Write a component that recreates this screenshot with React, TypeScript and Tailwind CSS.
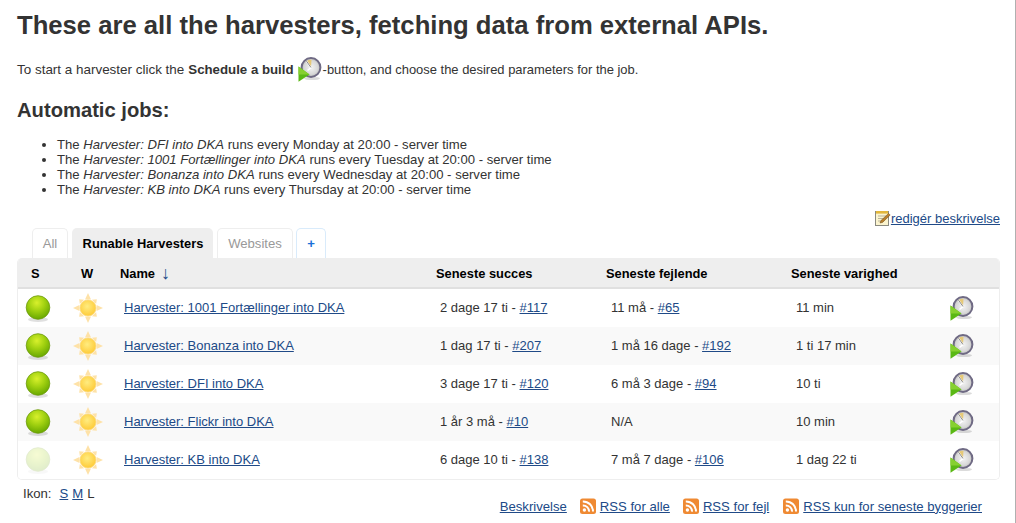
import { useId } from 'react'

interface Job {
  name: string
  success: string
  successBuild: string
  failed: string
  failedBuild?: string
  duration: string
  faded?: boolean
}

const jobs: Job[] = [
  { name: 'Harvester: 1001 Fortællinger into DKA', success: '2 dage 17 ti', successBuild: '#117', failed: '11 må', failedBuild: '#65', duration: '11 min' },
  { name: 'Harvester: Bonanza into DKA', success: '1 dag 17 ti', successBuild: '#207', failed: '1 må 16 dage', failedBuild: '#192', duration: '1 ti 17 min' },
  { name: 'Harvester: DFI into DKA', success: '3 dage 17 ti', successBuild: '#120', failed: '6 må 3 dage', failedBuild: '#94', duration: '10 ti' },
  { name: 'Harvester: Flickr into DKA', success: '1 år 3 må', successBuild: '#10', failed: 'N/A', duration: '10 min' },
  { name: 'Harvester: KB into DKA', success: '6 dage 10 ti', successBuild: '#138', failed: '7 må 7 dage', failedBuild: '#106', duration: '1 dag 22 ti', faded: true },
]

const schedule = [
  ['DFI', 'Monday'],
  ['1001 Fortællinger', 'Tuesday'],
  ['Bonanza', 'Wednesday'],
  ['KB', 'Thursday'],
]

const linkClass = 'text-[#204A87] underline'

function StatusBall({ faded }: { faded?: boolean }) {
  const id = useId()
  return (
    <svg width="26" height="28" viewBox="0 0 26 28" className={faded ? 'opacity-20' : ''}>
      <ellipse cx="13" cy="24.5" rx="10" ry="2.5" fill="#000" opacity="0.12" />
      <defs>
        <radialGradient id={id} cx="0.45" cy="0.3" r="0.7">
          <stop offset="0" stopColor="#d8f02c" />
          <stop offset="0.5" stopColor="#a0d010" />
          <stop offset="1" stopColor="#68a800" />
        </radialGradient>
      </defs>
      <circle cx="13" cy="12.5" r="11.8" fill={`url(#${id})`} stroke="#6f9a10" strokeWidth="0.8" />
    </svg>
  )
}

function Sun() {
  const id = useId()
  const rays = [0, 45, 90, 135, 180, 225, 270, 315]
  return (
    <svg width="30" height="30" viewBox="0 0 30 30">
      <defs>
        <radialGradient id={id} cx="0.45" cy="0.4" r="0.65">
          <stop offset="0" stopColor="#ffec80" />
          <stop offset="1" stopColor="#fec832" />
        </radialGradient>
      </defs>
      {rays.map(r => (
        <polygon
          key={r}
          points={r % 90 === 0 ? '15,0 18,6.5 12,6.5' : '15,2.5 18,6.5 12,6.5'}
          fill="#fee2a8"
          transform={`rotate(${r} 15 15)`}
        />
      ))}
      <circle cx="15" cy="15" r="8" fill={`url(#${id})`} stroke="#fcd978" strokeWidth="0.8" />
    </svg>
  )
}

function BuildIcon() {
  const id = useId()
  return (
    <svg width="24" height="25" viewBox="0 0 24 25" className="shrink-0">
      <defs>
        <radialGradient id={id} cx="0.5" cy="0.5" r="0.6">
          <stop offset="0" stopColor="#f4f4f4" />
          <stop offset="0.6" stopColor="#d8d8d8" />
          <stop offset="1" stopColor="#a8a8a8" />
        </radialGradient>
      </defs>
      <ellipse cx="14" cy="21.5" rx="8" ry="1.6" fill="#000" opacity="0.14" />
      <circle cx="13" cy="10.5" r="9.4" fill={`url(#${id})`} stroke="#6f6a84" strokeWidth="2" />
      <path d="M13 10.5 L8.5 4.2 A8 8 0 0 1 13.5 2.8 Z" fill="#e6c978" />
      <path d="M8.5 4.2 L13 10.5 L9.5 13.5" fill="none" stroke="#fff" strokeWidth="1.6" />
      <path d="M8.5 4.2 L13 10.5" fill="none" stroke="#555" strokeWidth="0.7" />
      <polygon points="0.5,9.5 11.5,17.5 0.5,24.8" fill="#5ab814" />
      <polygon points="0.5,9.5 11.5,17.5 0.5,17.5" fill="#86d030" />
    </svg>
  )
}

function RssIcon() {
  return (
    <svg width="16" height="16" viewBox="0 0 16 16" className="shrink-0">
      <rect x="0" y="0.5" width="16" height="15.5" rx="2.5" fill="#ef8a33" />
      <circle cx="4.4" cy="12" r="1.7" fill="#fff" />
      <path d="M2.8 7.4 A6 6 0 0 1 9 13.6" fill="none" stroke="#fff" strokeWidth="2" />
      <path d="M2.8 3.4 A10 10 0 0 1 13 13.6" fill="none" stroke="#fff" strokeWidth="2" />
    </svg>
  )
}

function NotepadIcon() {
  return (
    <svg width="16" height="16" viewBox="0 0 16 16" className="shrink-0">
      <rect x="0.5" y="1.5" width="13" height="14" fill="#fbf4cf" stroke="#8a8a80" />
      <rect x="1" y="1" width="12" height="2.6" fill="#e2b73d" />
      <path d="M3 6h8M3 8.5h6M3 11h5" stroke="#b8b39a" strokeWidth="1" />
      <path d="M5 13 L6 10.5 L13.5 3.5 L15.2 5 L7.6 12.4 Z" fill="#b9802c" stroke="#6d4a18" strokeWidth="0.5" />
    </svg>
  )
}

function JobRow({ job, striped }: { job: Job; striped: boolean }) {
  return (
    <div className={`flex h-[38px] items-center text-[13px] ${striped ? 'bg-[#f9f9f9]' : 'bg-white'}`}>
      <div className="flex w-[55px] shrink-0 pl-[7px] pt-[1px]"><StatusBall faded={job.faded} /></div>
      <div className="flex w-[47px] shrink-0"><Sun /></div>
      <div className="w-[316px] shrink-0 pb-[2px] pl-[4px]"><a className={linkClass}>{job.name}</a></div>
      <div className="w-[170px] shrink-0 pb-[2px] pl-[4px]">
        {job.success} - <a className={linkClass}>{job.successBuild}</a>
      </div>
      <div className="w-[185px] shrink-0 pb-[2px] pl-[5px]">
        {job.failed}
        {job.failedBuild && <> - <a className={linkClass}>{job.failedBuild}</a></>}
      </div>
      <div className="w-[159px] shrink-0 pb-[2px] pl-[5px]">{job.duration}</div>
      <BuildIcon />
    </div>
  )
}

export default function App() {
  return (
    <div className="h-[523px] overflow-hidden border-r border-[#b0b0b0] bg-white pl-[17px] pr-[15px] font-['Liberation_Sans',Arial,sans-serif] text-[13.13px] leading-[15px] text-[#333]">
      <h1 className="pt-[10px] text-[25.65px] font-bold leading-[30px]">
        These are all the harvesters, fetching data from external APIs.
      </h1>

      <p className="mt-[16px] flex h-[26px] items-center">
        <span className="text-[13.45px]">To start a harvester click the</span>
        <b className="ml-[4px] text-[13.25px]">Schedule a build</b>
        <span className="ml-[4px] mr-[1px] flex"><BuildIcon /></span>
        <span className="text-[12.95px]">-button, and choose the desired parameters for the job.</span>
      </p>

      <h2 className="mt-[16px] text-[20.2px] font-bold leading-[24px]">Automatic jobs:</h2>

      <ul className="mt-[15px] list-disc pl-[40px]">
        {schedule.map(([name, day]) => (
          <li key={name}>
            The <i>Harvester: {name} into DKA</i> runs every {day} at 20:00 - server time
          </li>
        ))}
      </ul>

      <div className="mt-[13px] flex h-[16px] items-center justify-end">
        <NotepadIcon />
        <a className={`text-[13px] ${linkClass}`}>redigér beskrivelse</a>
      </div>

      <div className="mt-[1px] flex h-[31px] items-end pl-[15px]">
        <div className="flex h-[30px] w-[36px] items-center justify-center rounded-t-[5px] border border-b-0 border-[#eeeeee] text-[#999]">All</div>
        <div className="ml-[4px] flex h-[30px] w-[141px] items-center justify-center rounded-t-[5px] bg-[#eeeeee] pl-[1px] text-[12.87px] font-bold text-black">Runable Harvesters</div>
        <div className="ml-[4px] flex h-[30px] w-[76px] items-center justify-center rounded-t-[5px] border border-b-0 border-[#eeeeee] text-[#999]">Websites</div>
        <div className="ml-[3px] flex h-[30px] w-[30px] items-center justify-center rounded-t-[5px] border border-b-0 border-[#d9ebfb] font-bold text-[#1a6fd8]">+</div>
      </div>

      <div className="overflow-hidden rounded-[5px] border-b border-l border-r border-[#eeeeee]">
        <div className="flex h-[31px] items-center border-b-2 border-[#e0e0e0] bg-[#eeeeee] pt-[1px] text-[12.87px] font-bold text-black">
          <div className="w-[55px] shrink-0 pl-[13px]">S</div>
          <div className="w-[47px] shrink-0 pl-[8px]">W</div>
          <div className="flex w-[316px] shrink-0 items-center">
            Name
            <span className="ml-[6px] text-[18px] font-normal text-[#204A87]">↓</span>
          </div>
          <div className="w-[170px] shrink-0">Seneste succes</div>
          <div className="w-[185px] shrink-0">Seneste fejlende</div>
          <div>Seneste varighed</div>
        </div>
        {jobs.map((job, i) => (
          <JobRow key={job.name} job={job} striped={i % 2 === 1} />
        ))}
      </div>

      <div className="flex items-start justify-between">
        <div className="flex pl-[6px] pt-[6px]">
          Ikon:
          <a className={`ml-[8px] ${linkClass}`}>S</a>
          <a className={`ml-[4px] ${linkClass}`}>M</a>
          <span className="ml-[4px]">L</span>
        </div>
        <div className="flex items-center pr-[18px] pt-[18px]">
          <a className={linkClass}>Beskrivelse</a>
          <span className="ml-[13px] mr-[4px]"><RssIcon /></span>
          <a className={linkClass}>RSS for alle</a>
          <span className="ml-[13px] mr-[4px]"><RssIcon /></span>
          <a className={linkClass}>RSS for fejl</a>
          <span className="ml-[14px] mr-[4px]"><RssIcon /></span>
          <a className={linkClass}>RSS kun for seneste byggerier</a>
        </div>
      </div>
    </div>
  )
}
